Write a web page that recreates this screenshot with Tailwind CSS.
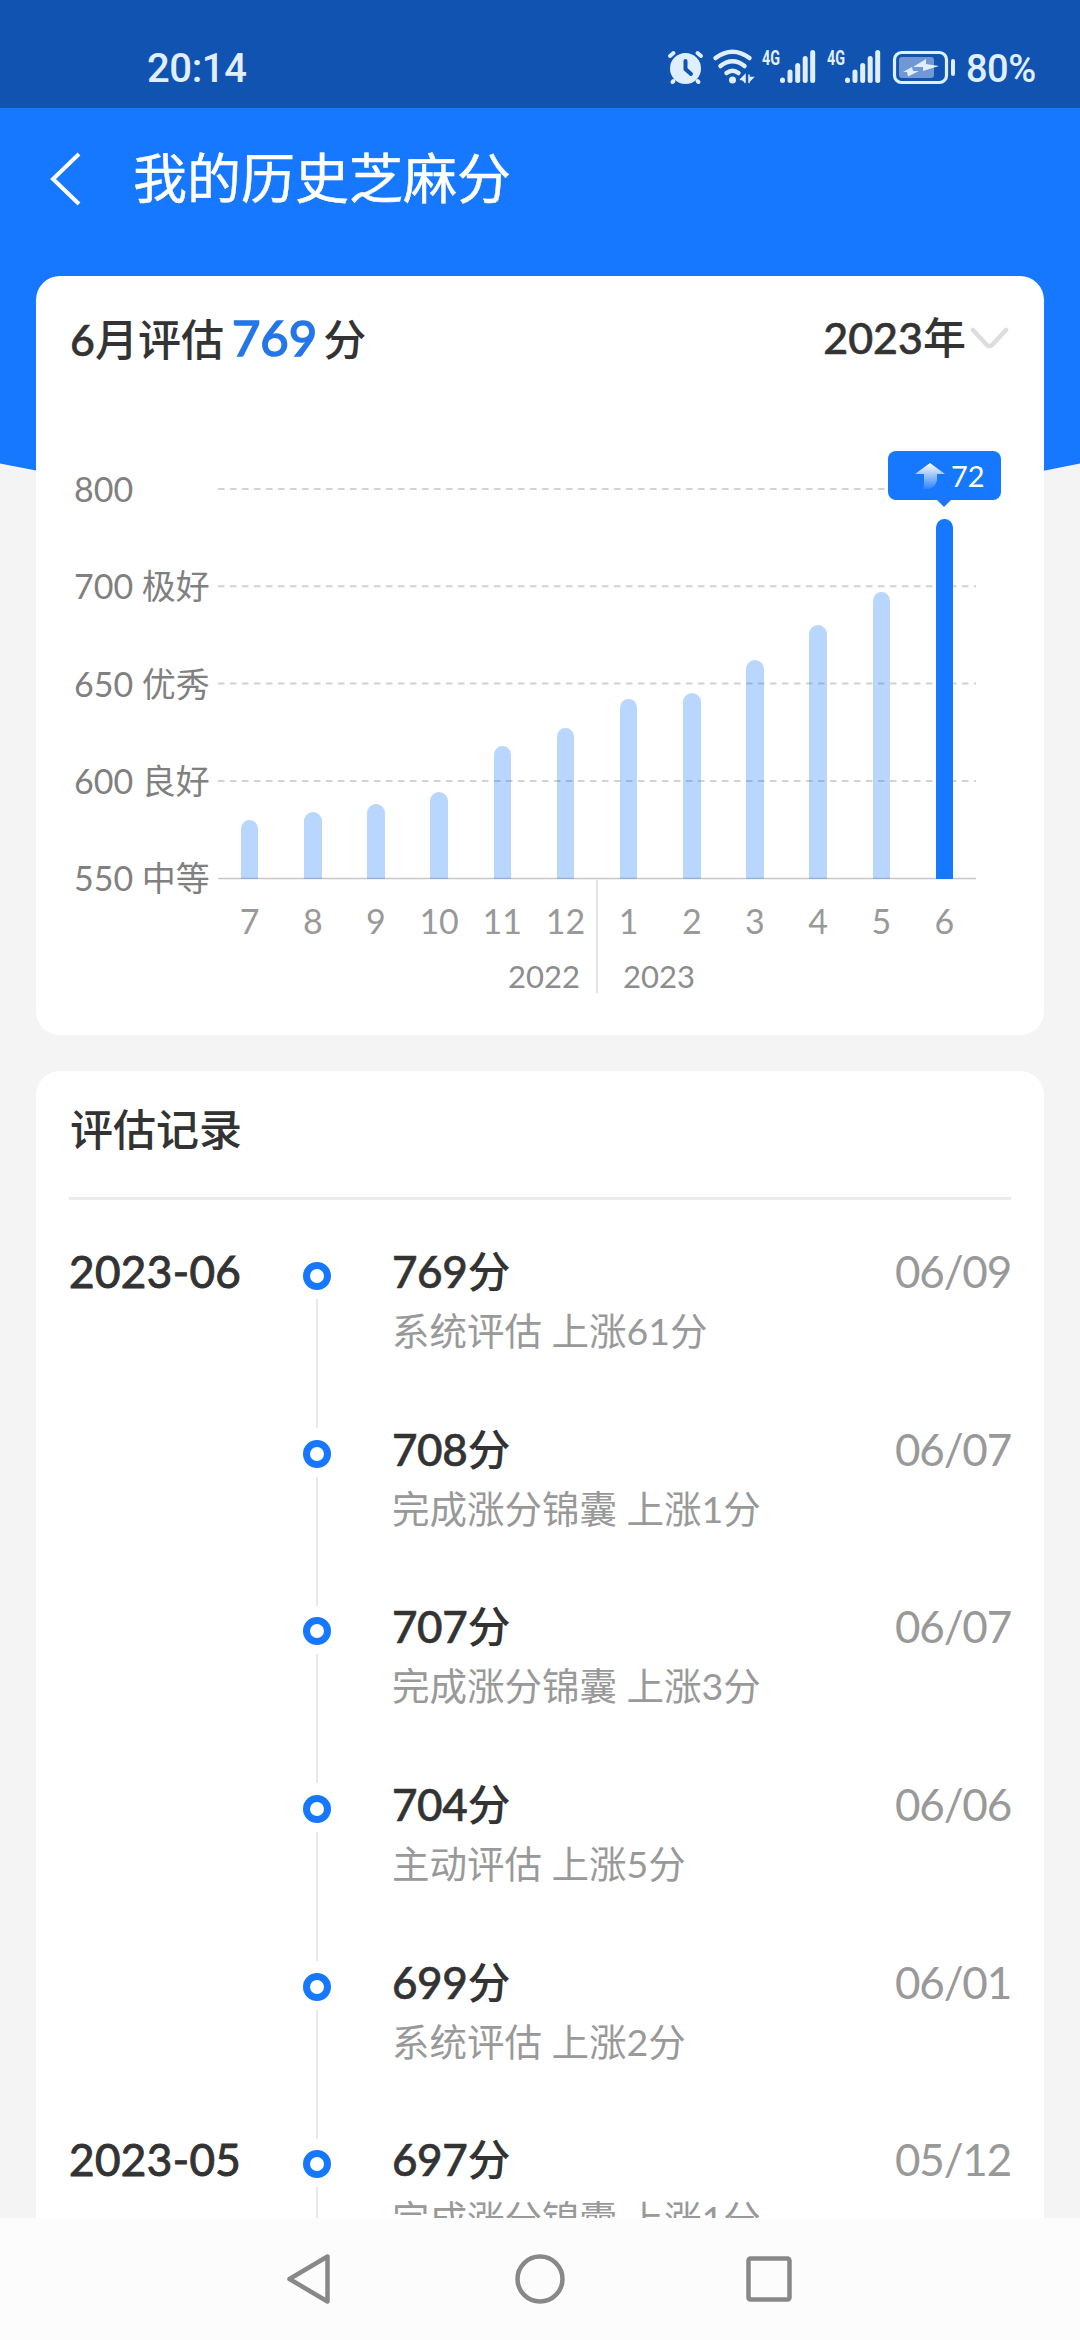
<!DOCTYPE html>
<html lang="zh-CN">

<head>
    <meta charset="UTF-8">
    <meta name="viewport" content="width=device-width, initial-scale=1.0">
    <title>我的历史芝麻分</title>
    <script src="https://cdn.jsdelivr.net/npm/@tailwindcss/browser@4"></script>
</head>

<body class="bg-[#f4f4f4] font-['Lato','Noto_Sans_CJK_SC',sans-serif] text-[#333]">
    <div class="relative w-[1080px] h-[2340px] overflow-hidden flex flex-col">
        <!-- blue backdrop with curved bottom -->
        <svg class="absolute left-0 top-0 -z-10" width="1080" height="560" viewBox="0 0 1080 560">
            <path d="M0 0H1080V463.500Q540 575 0 463.500Z" fill="#1677ff" />
        </svg>

        <!-- status bar -->
        <div class="h-[108px] shrink-0 bg-[#1053b1] text-[#e0efff] flex items-center justify-between pl-[147px] pt-[27px] font-['Roboto',sans-serif]">
            <span class="pt-[3px] text-[40px] leading-none font-medium tracking-[-0.4px]">20:14</span>
            <div class="flex items-center">
                <svg width="288" height="54" viewBox="667 40 288 54" fill="none" stroke="#e0efff" stroke-linecap="round">
                    <circle cx="685.500" cy="67.500" r="15.500" fill="#e0efff" stroke="none" />
                    <path d="M670 55L673.500 52M701 55L697.500 52M673.500 80L672.500 81M697.500 80L698.500 81" stroke-width="4" />
                    <path d="M685.500 60V68L691 73" stroke="#1053b1" stroke-width="4" />
                    <path d="M715.500 57Q732.500 44.500 749.500 57M720.500 65Q732.500 55.500 744.500 65M726.500 72Q732.500 67.500 738.500 72" stroke-width="4.500" />
                    <circle cx="732.500" cy="79" r="3.500" fill="#e0efff" stroke="none" />
                    <path d="M740.500 78.500L745 74V81.500M749 81.500V74M749 80.500L753 76.500H749" stroke-width="1.500" fill="#e0efff" />
                    <g stroke-width="5">
                        <path d="M782.500 79V79.500M790 71V79.500M797.700 64.500V79.500M805.200 57.500V79.500M812.700 51.500V79.500" />
                        <path d="M847.500 79V79.500M855 71V79.500M862.700 64.500V79.500M870.200 57.500V79.500M877.700 51.500V79.500" />
                    </g>
                    <g fill="#e0efff" stroke="none" font-size="20" font-weight="700" font-family="Roboto, sans-serif">
                        <text x="762" y="64" textLength="18" lengthAdjust="spacingAndGlyphs">4G</text>
                        <text x="827" y="64" textLength="18" lengthAdjust="spacingAndGlyphs">4G</text>
                    </g>
                    <rect x="894.500" y="51.500" width="52" height="30" rx="7" stroke-width="3.200" />
                    <rect x="899" y="56" width="35" height="21" rx="3" fill="#7098d4" stroke="none" />
                    <path d="M903 71L912 66L913 70L919 70L908 75.500L907 71ZM913 66L926 58L926 63L939 65L923 70L923 66Z" fill="#e0efff" stroke="none" />
                    <path d="M953 60V73" stroke-width="4" />
                </svg>
                <span class="w-[125px] pl-[11px] pt-[2px] text-[38px] leading-none font-medium tracking-[-0.5px]">80%</span>
            </div>
        </div>

        <!-- nav bar -->
        <header class="h-[168px] shrink-0 flex items-start text-white pl-[48px] pt-[43px]">
            <svg class="mt-[1px]" width="34" height="54" viewBox="0 0 34 54" fill="none">
                <path d="M31 2L5 27L31 52" stroke="white" stroke-width="4" />
            </svg>
            <h1 class="ml-[51px] text-[54px] leading-[56px] [-webkit-text-stroke:0.5px]">我的历史芝麻分</h1>
        </header>

        <!-- score chart -->
        <section class="mx-[36px] h-[759px] shrink-0 rounded-[24px] bg-white">
            <div class="flex items-start justify-between pl-[34px] pr-[35px] pt-[29px] h-[95px]">
                <div class="flex items-baseline text-[43px] leading-[64px] font-medium">
                    <span><span class="[-webkit-text-stroke:0.6px]">6</span>月评估</span>
                    <span class="ml-[8px] text-[49px] font-normal text-[#2576e8] [-webkit-text-stroke:1.6px]">769</span>
                    <span class="ml-[6px]">分</span>
                </div>
                <div class="flex items-center text-[43px] leading-[66px] font-medium">
                    <span><span class="[-webkit-text-stroke:0.6px]">2023</span>年</span>
                    <svg class="ml-[3px]" width="40" height="24" viewBox="0 0 40 24" fill="none">
                        <path d="M4 4L18 19Q20.500 21 23 19L37 4" stroke="#ddd" stroke-width="4.500" stroke-linecap="round" />
                    </svg>
                </div>
            </div>

            <div class="flex pt-[93px] pl-[38px]">
                <div class="w-[144px] shrink-0 h-[487px] flex flex-col text-[34px] leading-[49px] text-[#808080] whitespace-pre">
                    <div class="h-[97.300px]">800</div>
                    <div class="h-[97.300px]">700 极好</div>
                    <div class="h-[97.300px]">650 优秀</div>
                    <div class="h-[97.300px]">600 良好</div>
                    <div>550 中等</div>
                </div>
                <div class="relative w-[758px]">
                    <svg class="absolute left-0 top-0" width="758" height="430" viewBox="0 0 758 430" fill="none">
                        <path d="M0 25H758M0 122.300H758M0 219.600H758M0 317H758" stroke="#d2d2d2" stroke-width="2" stroke-dasharray="6.500 5.500" />
                        <path d="M0 414.500H758" stroke="#c8c8c8" stroke-width="1.500" />
                    </svg>
                    <div id="bars" class="relative h-[415px] flex items-end"></div>
                    <div id="months" class="flex pt-[17px] text-[34px] leading-[50px] text-[#999]"></div>
                    <div class="flex text-[31px] leading-[40px] pt-[10px] text-[#8c8c8c]">
                        <span class="w-[362px] text-right">2022</span>
                        <span class="ml-[43px]">2023</span>
                    </div>
                    <div class="absolute left-[378px] top-[416px] w-[2px] h-[113px] bg-[#e2e2e2]"></div>
                    <!-- tooltip of the current month -->
                    <div class="absolute left-[670px] top-[-13px] w-[113px] h-[49px] rounded-[8px] bg-[#1677ff] text-white flex items-center pl-[26px]">
                        <svg width="32" height="28" viewBox="0 0 32 28">
                            <defs>
                                <linearGradient id="fade" x1="0" y1="0" x2="0" y2="1">
                                    <stop offset="0" stop-color="#fff" />
                                    <stop offset="1" stop-color="#fff" stop-opacity=".1" />
                                </linearGradient>
                            </defs>
                            <path d="M16 1L31 12H23V18Q22 25 15 27L9 27Q10 25 10 20V12H1Z" fill="url(#fade)" />
                        </svg>
                        <span class="ml-[5px] text-[29px] leading-none">72</span>
                        <svg class="absolute left-[48px] top-[48px]" width="16" height="8" viewBox="0 0 16 8">
                            <path d="M0 0H16L8 8Z" fill="#1677ff" />
                        </svg>
                    </div>
                </div>
            </div>
        </section>

        <!-- records -->
        <section class="mx-[36px] mt-[36px] flex-1 min-h-0 overflow-hidden rounded-t-[24px] bg-white px-[33px]">
            <h2 class="h-[126px] pt-[29px] pl-px text-[43px] leading-[60px] font-medium">评估记录</h2>
            <div class="h-[3px] bg-[#ebebeb]"></div>
            <div id="records" class="pt-[41px]"></div>
        </section>

        <!-- system navigation -->
        <nav class="h-[122px] shrink-0 bg-[#fcfcfc] flex items-center justify-center gap-[180px]">
            <svg width="50" height="54" viewBox="0 0 50 54" fill="none" stroke="#888" stroke-width="4.500" stroke-linejoin="round">
                <path d="M42.500 4.500V49.500L4.500 27Z" />
            </svg>
            <svg width="50" height="54" viewBox="0 0 50 54" fill="none" stroke="#888" stroke-width="4.500">
                <circle cx="25" cy="27" r="22.500" />
            </svg>
            <svg width="50" height="54" viewBox="0 0 50 54" fill="none" stroke="#888" stroke-width="4.500">
                <rect x="3.500" y="6.500" width="41" height="41" rx="2" />
            </svg>
        </nav>
    </div>

    <script>
        const scores = [
            { month: 7, height: 59 },
            { month: 8, height: 67 },
            { month: 9, height: 75 },
            { month: 10, height: 87 },
            { month: 11, height: 133 },
            { month: 12, height: 151 },
            { month: 1, height: 180 },
            { month: 2, height: 186 },
            { month: 3, height: 219 },
            { month: 4, height: 254 },
            { month: 5, height: 287 },
            { month: 6, height: 360 }
        ];

        document.getElementById('bars').innerHTML = scores.map((s) => `
            <div class="flex-1 flex justify-center">
                <div class="w-[17.500px] rounded-t-full ${s.month === 6 ? 'bg-[#1677ff]' : 'bg-[#1677ff]/30'}" style="height: ${s.height}px"></div>
            </div>`).join('');

        document.getElementById('months').innerHTML = scores.map((s) => `<span class="flex-1 text-center">${s.month}</span>`).join('');

        const records = [
            { group: '2023-06', score: 769, text: '系统评估 上涨61分', date: '06/09' },
            { group: '', score: 708, text: '完成涨分锦囊 上涨1分', date: '06/07' },
            { group: '', score: 707, text: '完成涨分锦囊 上涨3分', date: '06/07' },
            { group: '', score: 704, text: '主动评估 上涨5分', date: '06/06' },
            { group: '', score: 699, text: '系统评估 上涨2分', date: '06/01' },
            { group: '2023-05', score: 697, text: '完成涨分锦囊 上涨1分', date: '05/12' }
        ];

        document.getElementById('records').innerHTML = records.map((r) => `
            <div class="h-[177.700px] flex text-[44px] leading-[60px]">
                <div class="w-[234px] tracking-[0.4px] [-webkit-text-stroke:1px]">${r.group}</div>
                <div class="w-[28px] flex flex-col items-center pt-[21px]">
                    <div class="size-[28px] shrink-0 rounded-full border-[7px] border-[#1677ff]"></div>
                    <div class="mt-[9px] w-[2px] h-[129px] shrink-0 bg-[#e8e8e8]"></div>
                </div>
                <div class="ml-[61px] flex-1">
                    <div class="h-[60px] font-medium"><span class="[-webkit-text-stroke:0.6px] tracking-[-0.4px]">${r.score}</span><span class="text-[43px]">分</span></div>
                    <div class="text-[37.500px] leading-[60px] text-[#999]">${r.text}</div>
                </div>
                <div class="text-[#999] tracking-[-1.200px]">${r.date}</div>
            </div>`).join('');
    </script>
</body>

</html>
